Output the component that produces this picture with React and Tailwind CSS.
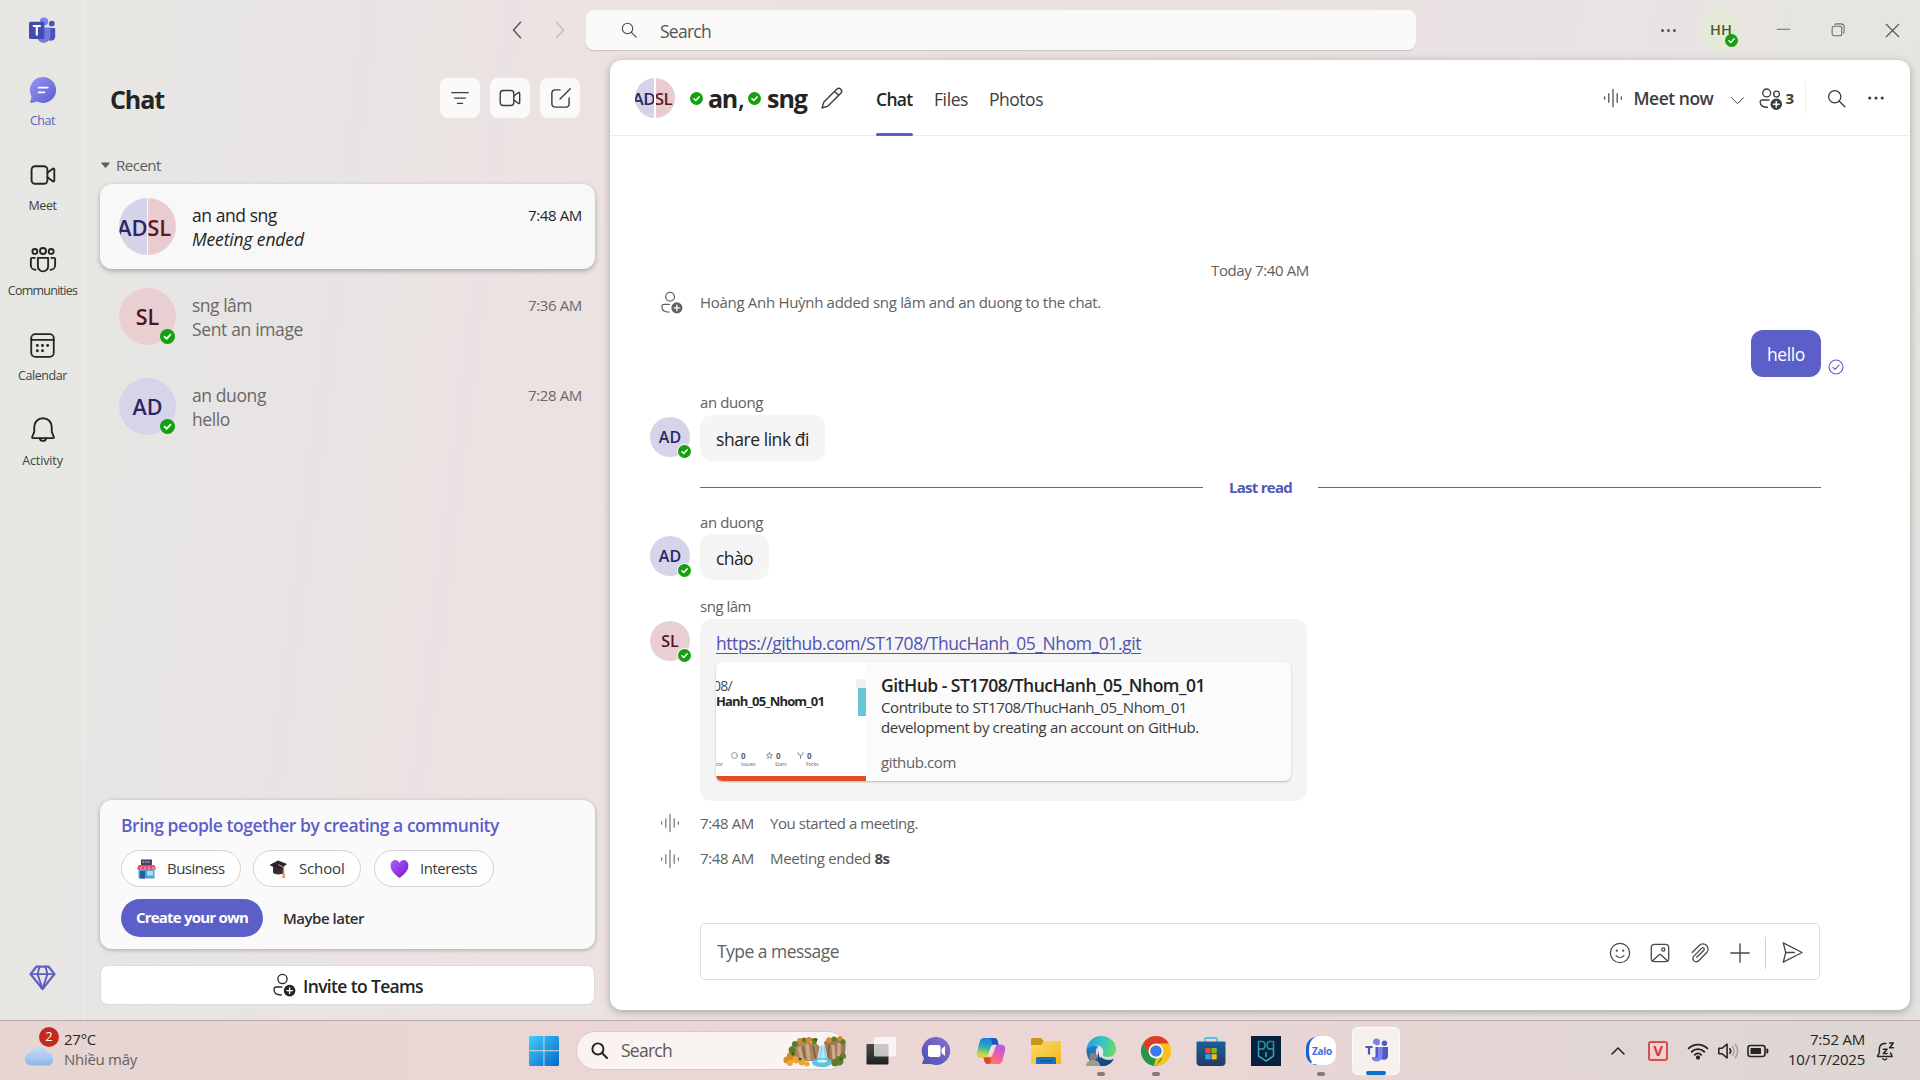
import React from "react";

function Svg({ size = 24, w, h, vb = "0 0 24 24", sw = 1.5, className = "", children }) {
  return (
    <svg
      width={w || size}
      height={h || size}
      viewBox={vb}
      fill="none"
      stroke="currentColor"
      strokeWidth={sw}
      strokeLinecap="round"
      strokeLinejoin="round"
      className={"shrink-0 " + className}
    >
      {children}
    </svg>
  );
}

/* ---------- line icons ---------- */
const Video = (p) => (
  <Svg {...p}>
    <rect x="2.2" y="4.5" width="13.6" height="15" rx="3" />
    <path d="M15.8 10l4.6-3.4c.6-.4 1.3 0 1.3.7v9.4c0 .7-.7 1.1-1.3.7L15.8 14" />
  </Svg>
);
const Magnifier = (p) => (
  <Svg {...p}>
    <circle cx="10" cy="10" r="7" />
    <path d="M15.2 15.2L21.5 21.5" />
  </Svg>
);
const Dots = (p) => (
  <Svg {...p} sw={0}>
    <g fill="currentColor">
      <circle cx="4.5" cy="12" r="1.9" />
      <circle cx="12" cy="12" r="1.9" />
      <circle cx="19.5" cy="12" r="1.9" />
    </g>
  </Svg>
);
const PersonAdd = (p) => (
  <Svg {...p}>
    <circle cx="10.5" cy="6" r="4.6" />
    <path d="M9.8 14H4.2c-1.2 0-2.1.9-2.1 2v.9c0 3.2 3 5 7.2 5.1" />
    <circle cx="17.6" cy="17.6" r="5.8" fill="currentColor" stroke="none" />
    <path d="M17.6 14.7v5.8M14.7 17.6h5.8" stroke="#fff" strokeWidth="1.4" />
  </Svg>
);
const PeopleAdd = (p) => (
  <Svg {...p}>
    <circle cx="8" cy="6.2" r="4.1" />
    <circle cx="18.3" cy="7.3" r="3" />
    <path d="M10.5 13.6H3.2c-1.2 0-2 .9-2 2 0 3.4 2.8 5.6 7.6 5.5" />
    <circle cx="18" cy="18" r="6" fill="currentColor" stroke="none" />
    <path d="M18 15v6M15 18h6" stroke="#fff" strokeWidth="1.5" />
  </Svg>
);
const Wave = (p) => (
  <Svg {...p}>
    <path d="M2 10.5v3M7 6.8v10.4M12 1.5v21M17 6.8v10.4M22 10.5v3" />
  </Svg>
);
const Communities = () => (
  <Svg size={28} sw={1.6} className="text-[#242424]">
    <circle cx="5" cy="4.7" r="2.1" />
    <circle cx="12" cy="4.3" r="2.6" />
    <circle cx="19" cy="4.7" r="2.1" />
    <path d="M7.6 10.2h8.8v7.2a4.4 4.4 0 0 1-8.8 0z" />
    <path d="M4.9 10.2H2.6c-.6 0-1 .4-1 1v5.2a4 4 0 0 0 4 4M19.1 10.2h2.300c.6 0 1 .4 1 1v5.2a4 4 0 0 1-4 4" />
  </Svg>
);
const Calendar = () => (
  <Svg size={27} sw={1.6} className="text-[#242424]">
    <rect x="2" y="1.9" width="20" height="20.2" rx="3.6" />
    <path d="M2 7h20" />
    <g fill="currentColor" stroke="none">
      <circle cx="7.4" cy="12" r="1.3" />
      <circle cx="12" cy="12" r="1.3" />
      <circle cx="16.6" cy="12" r="1.3" />
      <circle cx="7.4" cy="16.6" r="1.3" />
      <circle cx="12" cy="16.6" r="1.3" />
    </g>
  </Svg>
);
const Bell = () => (
  <Svg size={28} sw={1.6} className="text-[#242424]">
    <path d="M12 1.9c-4.3 0-7.5 3.3-7.5 7.5v4.3L2.7 18c-.2.5.1 1 .6 1h17.4c.5 0 .8-.5.6-1l-1.8-4.3V9.4c0-4.2-3.2-7.5-7.5-7.5z" />
    <path d="M9.2 19.2a2.9 2.9 0 0 0 5.6 0" />
  </Svg>
);
const Diamond = () => (
  <Svg size={27} sw={2} className="text-[#5b5fc7]">
    <path d="M6.5 2.4h11L22.6 9 12 22.2 1.4 9z" />
    <path d="M1.4 9h21.2M9.3 2.4L7.6 9 12 22l4.4-13-1.7-6.6" strokeWidth="1.7" />
  </Svg>
);
const ChatBubble = () => (
  <svg width="28" height="28" viewBox="0 0 28 28" className="shrink-0">
    <defs>
      <linearGradient id="bubble" x1="0" y1="0" x2="1" y2="1">
        <stop offset="0" stopColor="#9a96f5" />
        <stop offset="1" stopColor="#5a5cd2" />
      </linearGradient>
    </defs>
    <path d="M14.3 1A13 13 0 1 1 8.2 25.6L2.6 27c-.9.2-1.5-.4-1.3-1.3l1.2-5.5A13 13 0 0 1 14.3 1z" fill="url(#bubble)" />
    <path d="M9.7 11.6h9M9.7 16.4h5.7" stroke="#fff" strokeWidth="1.9" strokeLinecap="round" />
  </svg>
);
const TeamsLogo = () => (
  <svg width="27" height="27" viewBox="0 0 27 27" className="shrink-0">
    <circle cx="22.8" cy="6.6" r="2.9" fill="#4c52bb" />
    <path d="M18 11h8.2v8.5a4.2 4.2 0 0 1-8.2 1.2z" fill="#4c52bb" />
    <circle cx="15" cy="4.6" r="4.1" fill="#7b83eb" />
    <path d="M9 10.5h12.3V19a6.7 6.7 0 0 1-12.3 3.7z" fill="#7178de" />
    <rect x="0" y="4.7" width="15.3" height="17.3" rx="1.5" fill="#444bb3" />
    <path d="M3.8 9h8M7.8 9v9.6" stroke="#fff" strokeWidth="2.2" />
  </svg>
);

function Status({ size = 15 }) {
  return (
    <svg width={size} height={size} viewBox="0 0 16 16" className="shrink-0">
      <circle cx="8" cy="8" r="8" fill="#13a10e" />
      <path d="M4.9 8.3l2.2 2.2 4-4.4" stroke="#fff" strokeWidth="2" fill="none" strokeLinecap="round" strokeLinejoin="round" />
    </svg>
  );
}

/* ---------- avatars ---------- */
function PairAvatar({ big }) {
  return (
    <div className={"flex shrink-0 gap-[1.5px] overflow-hidden rounded-full " + (big ? "size-[57px]" : "size-10")}>
      <div className="flex flex-1 items-center justify-end overflow-hidden bg-[#d5d3ea]">
        <span className={"leading-none font-semibold text-[#2b2660] " + (big ? "-mr-px text-[22px]" : "-mr-px text-[17px] tracking-[-0.03em]")}>AD</span>
      </div>
      <div className="flex flex-1 items-center justify-start overflow-hidden bg-[#e9ccd0]">
        <span className={"leading-none font-semibold text-[#5c1a24] " + (big ? "-ml-px text-[22px]" : "-ml-px text-[17px] tracking-[-0.03em]")}>SL</span>
      </div>
    </div>
  );
}
function Avatar({ name, big }) {
  const color = name === "SL" ? "bg-[#e9cfd2] text-[#4f151e]" : "bg-[#d6d4ea] text-[#2b2660]";
  return (
    <div className={"relative flex shrink-0 items-center justify-center rounded-full " + (big ? "size-[57px] " : "size-10 ") + color}>
      <span className={"leading-none font-semibold " + (big ? "text-[21.5px]" : "text-[16px]")}>{name}</span>
      <div className={"absolute flex " + (big ? "right-px bottom-px" : "-right-0.5 -bottom-0.5 rounded-full border-[1.5px] border-white")}>
        <Status size={big ? 15 : 13} />
      </div>
    </div>
  );
}

/* ---------- left rail ---------- */
function RailItem({ icon, label, active, track }) {
  return (
    <div className="flex h-[85px] flex-col items-center">
      <div className="flex h-[34px] items-center">{icon}</div>
      <span className={"mt-[5px] text-[12.5px] leading-[18px] " + track + (active ? " text-[#5b5fc7]" : " text-[#424242]")}>{label}</span>
    </div>
  );
}
function Rail() {
  return (
    <div className="flex w-[85px] shrink-0 flex-col items-center border-r border-white/40 pl-px">
      <div className="mt-[17px] h-[27px]">
        <TeamsLogo />
      </div>
      <div className="mt-[29px] flex flex-col">
        <RailItem icon={<ChatBubble />} label="Chat" active track="tracking-[-0.035em]" />
        <RailItem icon={<Video size={28} sw={1.6} className="text-[#242424]" />} label="Meet" track="tracking-[-0.035em]" />
        <RailItem icon={<Communities />} label="Communities" track="tracking-[-0.06em]" />
        <RailItem icon={<Calendar />} label="Calendar" track="tracking-[-0.034em]" />
        <RailItem icon={<Bell />} label="Activity" track="tracking-[-0.01em]" />
      </div>
      <div className="mt-auto mb-[29px]">
        <Diamond />
      </div>
    </div>
  );
}

/* ---------- conversation list ---------- */
function SquareButton({ children }) {
  return <div className="flex size-10 items-center justify-center rounded-lg bg-[#fbfaf9] text-[#3d3d3d]">{children}</div>;
}
function Row({ avatar, title, sub, time, selected, subClass = "", titleClass = "" }) {
  return (
    <div
      className={
        "flex h-[85px] items-center rounded-xl pr-[13px] pl-[19px] " +
        (selected ? "bg-[#f9f8f8] text-[#242424] shadow-[0_2px_5px_rgba(0,0,0,0.28)]" : "text-[#6a6866]")
      }
    >
      {avatar}
      <div className="ml-[16px] flex flex-1 flex-col">
        <div className="flex items-center justify-between">
          <span className={"text-[17.5px] leading-6 " + titleClass}>{title}</span>
          <span className="text-[15px] leading-6 tracking-[-0.0243em]">{time}</span>
        </div>
        <span className={"text-[17.5px] leading-6 " + subClass}>{sub}</span>
      </div>
    </div>
  );
}
function Chip({ icon, label, w, track }) {
  return (
    <div className={"flex h-[37px] items-center rounded-full border border-[#d4d2d2] bg-[#fefefe] pl-[15px] " + w}>
      {icon}
      <span className={"ml-[11px] text-[15px] leading-none font-medium text-[#3a3a3a] " + track}>{label}</span>
    </div>
  );
}
const Shop = () => (
  <svg width="19" height="20" viewBox="0 0 19 20">
    <rect x="4" y="0.5" width="11" height="5.5" fill="#43455e" />
    <path d="M5.5 3.2h8" stroke="#c8b9d6" strokeWidth="1.2" strokeDasharray="1.6 1" />
    <rect x="1.5" y="9" width="16" height="10.5" fill="#4fa3cf" />
    <rect x="3" y="12" width="5" height="7.5" fill="#2b5e96" />
    <rect x="10" y="12" width="6" height="4.5" fill="#a9def0" />
    <path d="M1.500 6h16L19 10.500H0z" fill="#e4506b" />
    <path d="M4 8v2.500M8 8v2.500M12 8v2.500M16 8v2.500" stroke="#f59aa9" strokeWidth="1.4" />
  </svg>
);
const Cap = () => (
  <svg width="19" height="20" viewBox="0 0 19 20">
    <path d="M4 7.500h11v6.200c-2.500 2.300-8.500 2.300-11 0z" fill="#3c2a35" />
    <path d="M0.500 6L9 1.500 18 5l-8 6z" fill="#2b2230" />
    <path d="M9.500 5.500l5 3v7" stroke="#c58257" strokeWidth="1.3" fill="none" />
    <path d="M13.500 14.500h2.200l.6 4.500h-3.200z" fill="#e2a06e" />
  </svg>
);
const Heart = () => (
  <svg width="19" height="20" viewBox="0 0 19 20">
    <defs>
      <linearGradient id="heart" x1="0" y1="0" x2="1" y2="1">
        <stop offset="0" stopColor="#b35df5" />
        <stop offset="1" stopColor="#7416d8" />
      </linearGradient>
    </defs>
    <path d="M9.500 19C4 15 .6 11.500.6 6.600.6 3.300 2.700 1 5.300 1c1.900 0 3.400 1.100 4.200 2.900C10.300 2.100 11.800 1 13.700 1c2.600 0 4.700 2.300 4.700 5.600 0 4.900-3.400 8.400-8.900 12.400z" fill="url(#heart)" />
  </svg>
);
function Sidebar() {
  return (
    <div className="flex w-[525px] shrink-0 flex-col pr-[15px] pl-[15px]">
      <div className="mt-[18px] flex h-10 items-center pr-[15px] pl-[10px]">
        <span className="pt-0.5 text-[25px] leading-none font-bold tracking-[-0.043em] text-[#242424]">Chat</span>
        <div className="ml-auto flex gap-[10px]">
          <SquareButton>
            <Svg size={20} sw={1.5}>
              <path d="M2 5.500h20M5.500 12h13M9 18.500h6" />
            </Svg>
          </SquareButton>
          <SquareButton>
            <Video size={24} sw={1.4} />
          </SquareButton>
          <SquareButton>
            <Svg size={23} sw={1.5}>
              <path d="M11.500 3H6.500A3.500 3.500 0 0 0 3 6.500v11A3.500 3.500 0 0 0 6.500 21h11a3.500 3.500 0 0 0 3.500-3.500v-6M11.500 12.500L22.200 1.800" />
            </Svg>
          </SquareButton>
        </div>
      </div>
      <div className="mt-[35px] flex h-6 items-center text-[#5f5d5c]">
        <svg width="9" height="6" viewBox="0 0 9 6" className="ml-px">
          <path d="M1 .5h7c.6 0 .8.6.5 1L5 5.600c-.3.3-.7.3-1 0L.5 1.500c-.4-.4-.1-1 .5-1z" fill="currentColor" />
        </svg>
        <span className="ml-[6px] text-[15px] leading-none tracking-[-0.032em]">Recent</span>
      </div>
      <div className="mt-[7px] flex flex-col gap-[5px]">
        <Row selected avatar={<PairAvatar big />} title="an and sng" titleClass="tracking-[-0.025em]" sub="Meeting ended" subClass="italic tracking-[-0.008em]" time="7:48 AM" />
        <Row avatar={<Avatar name="SL" big />} title="sng lâm" titleClass="tracking-[-0.028em]" sub="Sent an image" subClass="tracking-[-0.02em]" time="7:36 AM" />
        <Row avatar={<Avatar name="AD" big />} title="an duong" titleClass="tracking-[-0.023em]" sub="hello" subClass="tracking-[-0.022em]" time="7:28 AM" />
      </div>
      <div className="mt-auto flex h-[149px] flex-col rounded-xl bg-[#fbfafa] px-[21px] pt-[13px] shadow-[0_1px_4px_rgba(0,0,0,0.28)]">
        <span className="text-[17.5px] leading-6 font-semibold tracking-[-0.0258em] text-[#5b5fc7]">Bring people together by creating a community</span>
        <div className="mt-[13px] flex gap-3">
          <Chip icon={<Shop />} label="Business" w="w-[120px]" track="tracking-[-0.035em]" />
          <Chip icon={<Cap />} label="School" w="w-[108px]" track="tracking-[-0.01em]" />
          <Chip icon={<Heart />} label="Interests" w="w-[120px] ml-[1px]" track="tracking-[-0.032em]" />
        </div>
        <div className="mt-[12px] flex items-center">
          <div className="flex h-[38px] w-[142px] items-center justify-center rounded-full bg-[#5b5fc7]">
            <span className="pb-px text-[15px] leading-none font-bold tracking-[-0.053em] text-white">Create your own</span>
          </div>
          <span className="ml-5 text-[15px] leading-none font-semibold tracking-[-0.0326em] text-[#2f2f2f]">Maybe later</span>
        </div>
      </div>
      <div className="mt-[16px] mb-[15px] flex h-10 items-center justify-center rounded-lg border border-[#dcdada] bg-white text-[#242424]">
        <PersonAdd size={24} sw={1.3} />
        <span className="ml-[7px] pt-[3px] text-[17.5px] leading-none font-semibold tracking-[-0.037em]">Invite to Teams</span>
      </div>
    </div>
  );
}

/* ---------- title bar ---------- */
function TitleBar() {
  return (
    <div className="flex h-[60px] shrink-0 items-center">
      <Svg size={24} sw={1.5} className="ml-[421px] text-[#5a5858]">
        <path d="M14.500 4.200L7.500 12l7 7.800" />
      </Svg>
      <Svg size={24} sw={1.5} className="ml-[17px] text-[#c4c0c0]">
        <path d="M9.500 4.200l7 7.800-7 7.800" />
      </Svg>
      <div className="ml-[15px] flex h-10 w-[830px] items-center rounded-lg bg-[#fbfaf8] pl-[34px] shadow-[0_1px_1px_rgba(0,0,0,0.15)]">
        <Magnifier size={18} sw={1.5} className="text-[#4c4a4a]" />
        <span className="ml-[22px] pt-1 text-[17.5px] leading-none tracking-[-0.042em] text-[#565453]">Search</span>
      </div>
      <Dots size={19} className="ml-[243px] text-[#555]" />
      <div className="relative ml-[23px] flex size-10 items-center justify-center rounded-full bg-[#e4ead6]">
        <span className="text-[14.5px] leading-none font-semibold text-[#4c5a2b]">HH</span>
        <div className="absolute right-[3px] bottom-[3px]">
          <Status size={13} />
        </div>
      </div>
      <Svg size={15} sw={1.7} className="ml-[35px] text-[#6a6a6a]">
        <path d="M2 10h20" />
      </Svg>
      <Svg size={14} sw={1.8} className="ml-[40px] text-[#6a6a6a]">
        <rect x="2" y="5.5" width="16.5" height="16.5" rx="3.5" />
        <path d="M6.500 2.500c1-.8 2-1 3.500-1h6.500a6 6 0 0 1 6 6v6.500c0 1.500-.2 2.500-1 3.500" />
      </Svg>
      <Svg size={15} sw={1.8} className="ml-[40px] text-[#555]">
        <path d="M2 2l20 20M22 2L2 22" />
      </Svg>
    </div>
  );
}

/* ---------- chat panel ---------- */
function PanelHeader() {
  return (
    <div className="flex h-[76px] shrink-0 border-b border-[#ececec] text-[#3d3d3d]">
      <div className="flex h-[76px] items-center pl-[25px]">
        <PairAvatar />
        <div className="ml-[15px] flex items-center">
          <Status size={13} />
          <span className="ml-[5px] w-[40px] text-[25px] leading-none font-bold tracking-[-0.05em] whitespace-nowrap text-[#242424]">
            an<span className="ml-px font-semibold">,</span>
          </span>
          <Status size={13} />
          <span className="ml-[6px] w-[42px] text-[25px] leading-none font-bold tracking-[-0.04em] text-[#242424]">sng</span>
        </div>
        <Svg size={24} sw={1.4} className="ml-[11px]">
          <path d="M16.700 3.200a2.900 2.900 0 0 1 4.100 4.100L8.500 19.600c-.4.4-.9.7-1.400.8L2 22l1.600-5.100c.1-.5.4-1 .8-1.400zM14.600 5.300l4.100 4.100" />
        </Svg>
        <div className="ml-[32px] flex h-[75px] gap-[21px] text-[17.5px] leading-none">
          <div className="relative flex w-[37px] items-center pt-[3px]">
            <span className="font-semibold tracking-[-0.04em] text-[#242424]">Chat</span>
            <div className="absolute bottom-0 left-0 h-[3px] w-full rounded-full bg-[#5b5fc7]" />
          </div>
          <div className="flex w-[34px] items-center pt-[3px] tracking-[-0.0234em]">Files</div>
          <div className="flex items-center pt-[3px] tracking-[-0.0277em]">Photos</div>
        </div>
      </div>
      <div className="ml-auto flex h-[76px] items-center pr-[24px]">
        <Wave size={20} sw={1.4} />
        <span className="ml-[10px] pt-0.5 text-[17.5px] leading-none font-semibold tracking-[-0.0273em]">Meet now</span>
        <Svg size={15} sw={1.6} className="mt-1 ml-[17px]">
          <path d="M2.500 7.500L12 17l9.500-9.500" />
        </Svg>
        <PeopleAdd size={23} sw={1.4} className="ml-[14px]" />
        <span className="ml-[3px] text-[15px] leading-none font-bold">3</span>
        <div className="ml-[11px] h-8 w-px bg-[#efefef]" />
        <Magnifier size={21} sw={1.5} className="ml-[20px]" />
        <Dots size={20} className="ml-[19px]" />
      </div>
    </div>
  );
}
function Gutter({ children }) {
  return (
    <div className="flex w-[90px] shrink-0 justify-end pr-[10px]">
      <div className="flex w-10 items-center justify-center">{children}</div>
    </div>
  );
}
function Name({ children, className = "" }) {
  return <div className={"h-[18px] pl-[90px] text-[15px] leading-[18px] text-[#616161] " + className}>{children}</div>;
}
function Message({ who, text, w, track, mt }) {
  return (
    <div className={"flex items-start " + mt}>
      <div className="mt-[2px]">
        <Gutter>
          <Avatar name={who} />
        </Gutter>
      </div>
      <div className={"flex h-[46px] items-center rounded-xl bg-[#f5f5f5] pl-4 " + w}>
        <span className={"pt-[3px] text-[17.5px] leading-none text-[#242424] " + track}>{text}</span>
      </div>
    </div>
  );
}
function Thumb() {
  return (
    <div className="relative flex w-[150px] shrink-0 flex-col overflow-hidden bg-white">
      <span className="mt-[15px] -ml-[3px] text-[14px] leading-[18px] tracking-[-0.05em] text-[#444c56]">08/</span>
      <span className="-mt-[2px] text-[13px] leading-[16px] font-bold tracking-[-0.0646em] whitespace-nowrap text-[#24292f]">Hanh_05_Nhom_01</span>
      <div className="absolute top-[17px] right-0 flex flex-col">
        <div className="h-[9px] w-[10px] bg-[#eef1f3]" />
        <div className="ml-[2px] h-[28px] w-2 bg-[#67c7d4]" />
      </div>
      <div className="mt-[42px] flex text-[8px] leading-[9px] text-[#57606a]">
        <div className="flex w-[15px] flex-col justify-end text-[5px] leading-[8px]">tor</div>
        <div className="flex w-[35px] flex-col">
          <div className="flex items-center gap-[3px] font-bold">
            <Svg size={7} sw={2.2}>
              <circle cx="12" cy="12" r="10" />
            </Svg>
            0
          </div>
          <span className="ml-[10px] text-[5px] leading-[8px]">Issues</span>
        </div>
        <div className="flex w-[31px] flex-col">
          <div className="flex items-center gap-[3px] font-bold">
            <Svg size={7} sw={2.2}>
              <path d="M12 2l3 7 7 .5-5.500 4.500L18.500 22 12 17.500 5.500 22l2-8L2 9.500 9 9z" />
            </Svg>
            0
          </div>
          <span className="ml-[9px] text-[5px] leading-[8px]">Stars</span>
        </div>
        <div className="flex flex-col">
          <div className="flex items-center gap-[3px] font-bold">
            <Svg size={7} sw={2.6}>
              <path d="M4 3v4l8 6 8-6V3M12 13v9" />
            </Svg>
            0
          </div>
          <span className="ml-[9px] text-[5px] leading-[8px]">Forks</span>
        </div>
      </div>
      <div className="mt-auto h-[5px] bg-[#e34c26]" />
    </div>
  );
}
function Conversation() {
  return (
    <div className="flex flex-1 flex-col">
      <div className="mt-[124px] flex h-5 justify-center">
        <span className="text-[15px] leading-5 tracking-[-0.0244em] text-[#616161]">Today 7:40 AM</span>
      </div>
      <div className="mt-[7px] flex h-[30px] items-center text-[#616161]">
        <Gutter>
          <PersonAdd size={23} sw={1.3} className="translate-x-px" />
        </Gutter>
        <span className="text-[15px] leading-none tracking-[-0.0204em]">Hoàng Anh Huỳnh added sng lâm and an duong to the chat.</span>
      </div>
      <div className="mt-[13px] flex h-[47px] items-end justify-end pr-[66px]">
        <div className="flex h-[47px] w-[70px] items-center justify-center rounded-xl bg-[#5b5fc7]">
          <span className="pt-0.5 text-[17.5px] leading-none tracking-[-0.022em] text-white">hello</span>
        </div>
        <Svg size={16} sw={1.6} className="mb-[2px] ml-[7px] text-[#5b5fc7]">
          <circle cx="12" cy="12" r="10.5" />
          <path d="M7.500 12.500l3.200 3.200 6-6.500" />
        </Svg>
      </div>
      <Name className="mt-[16px] tracking-[-0.0266em]">an duong</Name>
      <Message mt="mt-[4px]" who="AD" text="share link đi" w="w-[125px]" track="tracking-[-0.0254em]" />
      <div className="mt-[16px] flex h-5 items-center pr-[89px] pl-[90px]">
        <div className="h-px flex-1 bg-[#6264a7]" />
        <span className="mx-[26px] text-[15px] leading-5 font-bold tracking-[-0.049em] text-[#5357b5]">Last read</span>
        <div className="h-px flex-1 bg-[#6264a7]" />
      </div>
      <Name className="mt-[16px] tracking-[-0.0266em]">an duong</Name>
      <Message mt="mt-[3px]" who="AD" text="chào" w="w-[69px]" track="tracking-[-0.034em]" />
      <Name className="mt-[17px] tracking-[-0.0324em]">sng lâm</Name>
      <div className="mt-[4px] flex items-start">
        <div className="mt-[2px]">
          <Gutter>
            <Avatar name="SL" />
          </Gutter>
        </div>
        <div className="flex h-[182px] w-[607px] flex-col rounded-xl bg-[#f4f4f4] px-4 pt-[11px]">
          <span className="text-[17.5px] leading-[26px] tracking-[-0.0243em] text-[#4f52b2] underline decoration-1 underline-offset-[3px]">https://github.com/ST1708/ThucHanh_05_Nhom_01.git</span>
          <div className="mt-[6px] flex h-[119px] w-[575px] overflow-hidden rounded-md bg-[#fbfbfb] shadow-[0_1px_2px_rgba(0,0,0,0.25)]">
            <Thumb />
            <div className="flex flex-col pt-[11px] pl-[15px] text-[#242424]">
              <span className="text-[17.5px] leading-[24px] font-semibold tracking-[-0.0288em]">GitHub - ST1708/ThucHanh_05_Nhom_01</span>
              <span className="text-[15px] leading-5 tracking-[-0.0277em] text-[#3a3a3a]">Contribute to ST1708/ThucHanh_05_Nhom_01</span>
              <span className="text-[15px] leading-5 tracking-[-0.0232em] text-[#3a3a3a]">development by creating an account on GitHub.</span>
              <span className="mt-[15px] text-[15px] leading-5 tracking-[-0.0259em] text-[#616161]">github.com</span>
            </div>
          </div>
        </div>
      </div>
      <div className="mt-[12px] flex h-5 items-center text-[15px] leading-none text-[#616161]">
        <Gutter>
          <Wave size={20} sw={1.3} />
        </Gutter>
        <span className="w-[70px] tracking-[-0.0243em]">7:48 AM</span>
        <span className="tracking-[-0.0294em]">You started a meeting.</span>
      </div>
      <div className="mt-[15px] flex h-5 items-center text-[15px] leading-none text-[#616161]">
        <Gutter>
          <Wave size={20} sw={1.3} className="translate-y-px" />
        </Gutter>
        <span className="w-[70px] tracking-[-0.0243em]">7:48 AM</span>
        <span className="tracking-[-0.0212em]">
          Meeting ended <b className="font-bold tracking-[-0.035em] text-[#484848]">8s</b>
        </span>
      </div>
      <div className="mt-auto mr-[90px] mb-[30px] ml-[90px] flex h-[57px] items-center rounded-[5px] border border-[#dedede] pr-[15px] pl-4 text-[#484848]">
        <span className="pt-px text-[17.5px] leading-none tracking-[-0.0307em] text-[#616161]">Type a message</span>
        <div className="ml-auto flex items-center gap-[18px] pt-0.5">
          <Svg size={22} sw={1.3}>
            <circle cx="12" cy="12" r="10.5" />
            <path d="M7.700 14.800c2.200 2.800 6.400 2.800 8.600 0" />
            <circle cx="8.500" cy="9.500" r="1.2" fill="currentColor" stroke="none" />
            <circle cx="15.500" cy="9.500" r="1.2" fill="currentColor" stroke="none" />
          </Svg>
          <Svg size={22} sw={1.4}>
            <rect x="2.5" y="2.5" width="19" height="19" rx="3.5" />
            <circle cx="15.600" cy="8.200" r="1.7" />
            <path d="M4 20.500l6.700-6.400c.7-.7 1.800-.7 2.600 0L20 20.500" />
          </Svg>
          <Svg size={22} sw={1.4}>
            <path d="M3.500 11.500l7.600-7.700a5.600 5.600 0 0 1 8 8L10.500 20.500a3.600 3.600 0 0 1-5.200-5.100l8.600-8.700a1.600 1.600 0 0 1 2.300 2.300l-7.700 7.700" />
          </Svg>
          <Svg size={22} sw={1.5}>
            <path d="M12 2v20M2 12h20" />
          </Svg>
          <div className="-ml-[4px] h-8 w-px bg-[#d1d1d1]" />
          <Svg size={23} sw={1.4} className="-ml-[3px]">
            <path d="M2.300 1.900L22 12 2.300 22.100 5 12zM5 12h9" />
          </Svg>
        </div>
      </div>
    </div>
  );
}

/* ---------- taskbar ---------- */
const Windows = () => (
  <svg width="30" height="30" viewBox="0 0 30 30">
    <defs>
      <linearGradient id="win" x1="0" y1="0" x2="1" y2="1">
        <stop offset="0" stopColor="#3fcdfb" />
        <stop offset="1" stopColor="#0569c9" />
      </linearGradient>
    </defs>
    <path d="M1.500 0H14.500V14.300H0V1.500Q0 0 1.500 0zM15.400 0H28.500Q30 0 30 1.500V14.300H15.400zM0 15.300H14.500V30H1.500Q0 30 0 28.500zM15.400 15.300H30V28.500Q30 30 28.500 30H15.400z" fill="url(#win)" />
  </svg>
);
const Waterfall = () => (
  <svg width="64" height="32" viewBox="0 0 64 32">
    <path d="M7 14C10 4 22 3 32 7l5 5v14H8z" fill="#a8855f" />
    <path d="M41 7c6-5 15-5 20-3 3 7 2 16-2 23H44z" fill="#9c7a55" />
    <path d="M16 12l3 12M24 9l2 16M50 10l1 14M56 8v13" stroke="#c9a986" strokeWidth="3.5" />
    <path d="M20 12l2 11M30 11l3 14M46 10l-1 13" stroke="#7d5d41" strokeWidth="1.5" />
    <path d="M37 10h5l3 15H34z" fill="#bfe6f5" />
    <path d="M39 12l-2 12M41.500 12l1.500 12" stroke="#79cce8" strokeWidth="1.3" />
    <ellipse cx="39" cy="27.500" rx="10" ry="4.500" fill="#5cc3e4" />
    <ellipse cx="39" cy="26" rx="5" ry="1.500" fill="#d5f2fb" />
    <g fill="#d98a24">
      <circle cx="17" cy="6" r="3" />
      <circle cx="26" cy="5" r="3" />
      <circle cx="46" cy="5" r="2.8" />
      <circle cx="8" cy="21" r="4" />
      <circle cx="4" cy="25" r="3.5" />
      <circle cx="57" cy="3.500" r="2.4" />
    </g>
    <g fill="#5d7d2b">
      <circle cx="12" cy="9" r="3" />
      <circle cx="21" cy="5" r="2.4" />
      <circle cx="31" cy="6" r="3" />
      <circle cx="9" cy="15" r="3.4" />
      <circle cx="51" cy="4" r="2.6" />
      <circle cx="60" cy="7" r="2.6" />
      <circle cx="56" cy="26" r="4.5" />
      <circle cx="52" cy="28" r="3.5" />
      <circle cx="60" cy="21" r="3" />
    </g>
    <g fill="#e9a73a">
      <circle cx="13" cy="25" r="3.6" />
      <circle cx="19" cy="27" r="3.5" />
      <circle cx="24" cy="29" r="2.5" />
      <circle cx="7" cy="28" r="3" />
      <circle cx="28" cy="7" r="1.6" />
    </g>
    <g fill="#3f5f20">
      <circle cx="10" cy="19" r="1.8" />
      <circle cx="17" cy="24" r="1.6" />
      <circle cx="58" cy="24" r="1.6" />
      <circle cx="33" cy="4.500" r="1.5" />
    </g>
  </svg>
);
const TaskView = () => (
  <svg width="30" height="30" viewBox="0 0 30 30">
    <defs>
      <linearGradient id="tv" x1="0" y1="0" x2="0" y2="1">
        <stop offset="0" stopColor="#4a4a4a" />
        <stop offset="1" stopColor="#1f1f1f" />
      </linearGradient>
    </defs>
    <rect x="0.5" y="8" width="22" height="20.5" rx="1" fill="url(#tv)" />
    <rect x="8" y="1" width="22" height="19.5" rx="1" fill="#fff" fillOpacity="0.7" />
  </svg>
);
const VideoChat = () => (
  <svg width="30" height="30" viewBox="0 0 30 30">
    <defs>
      <linearGradient id="vc" x1="0" y1="1" x2="1" y2="0">
        <stop offset="0" stopColor="#4b4fb5" />
        <stop offset="1" stopColor="#8a70cf" />
      </linearGradient>
    </defs>
    <path d="M15.500 1A14 14 0 1 1 10 28H2c-.8 0-1-.6-.7-1.200L3 22.500A14 14 0 0 1 15.500 1z" fill="url(#vc)" />
    <rect x="7" y="9" width="12.5" height="12" rx="2" fill="#fff" />
    <path d="M20.500 13l3.500-3v10l-3.500-3z" fill="#fff" />
  </svg>
);
const Copilot = () => (
  <svg width="30" height="30" viewBox="0 0 30 30">
    <defs>
      <linearGradient id="cpa" x1="0.3" y1="0" x2="0.1" y2="1">
        <stop offset="0" stopColor="#1b7ce8" />
        <stop offset="0.45" stopColor="#2fb5a8" />
        <stop offset="0.8" stopColor="#c9dc3c" />
        <stop offset="1" stopColor="#f7c62c" />
      </linearGradient>
      <linearGradient id="cpb" x1="0.8" y1="0" x2="0.2" y2="1">
        <stop offset="0" stopColor="#a45de8" />
        <stop offset="0.5" stopColor="#ee5fa0" />
        <stop offset="1" stopColor="#f98b4a" />
      </linearGradient>
    </defs>
    <path d="M8 2h10c2 0 3 1 3.600 3l1 4h-4.300c-2 0-3 1-3.600 3l-2 7c-.6 2-1.700 3-3.500 3H5c-3.500 0-4.800-2.500-4-6L3.500 6C4.200 3.300 5.500 2 8 2z" fill="url(#cpa)" />
    <path d="M15 2h3c2 0 3 1 3.600 3l1 4h-4.200c-1.500 0-2-.8-2.400-2z" fill="#1d52c4" />
    <path d="M22 28H12c-2 0-3-1-3.600-3l-1-3.500h2.300c2 0 3-1 3.600-3l2.400-7c.6-1.800 1.600-2.700 3.300-2.700h6c3.500 0 4.800 2.300 4 6L26.500 24c-.7 2.700-2 4-4.500 4z" fill="url(#cpb)" />
    <path d="M8.400 25l-1-3.500h2.300c2 0 3-1 3.600-3l.5-1.500 1 7c.2 2.500-.5 4-2.800 4-2 0-3-1-3.600-3z" fill="#e0452d" />
    <path d="M14 13.500c.6-2.500 1.500-4 3.500-4.700h3l-3.800 9.700c-.6 1.800-1.600 2.700-3.300 2.700h-2z" fill="#fbe6e6" fillOpacity="0.85" />
  </svg>
);
const Folder = () => (
  <svg width="30" height="30" viewBox="0 0 30 30">
    <defs>
      <linearGradient id="fd" x1="0" y1="0" x2="1" y2="1">
        <stop offset="0" stopColor="#fbdc63" />
        <stop offset="1" stopColor="#f1b71c" />
      </linearGradient>
    </defs>
    <path d="M0 3.500Q0 2 1.500 2H10l3 3.500H30V14H0z" fill="#c9941a" />
    <path d="M0 9h10l3-4H29.500q.5 0 .5.500V28H0z" fill="url(#fd)" />
    <path d="M5 28v-5.500Q5 21 6.500 21h17q1.500 0 1.500 1.500V28z" fill="#1c71bd" />
    <path d="M9.500 25h11" stroke="#0c4f90" strokeWidth="1.2" />
  </svg>
);
const Edge = () => (
  <svg width="30" height="30" viewBox="0 0 30 30">
    <defs>
      <linearGradient id="eg" x1="0" y1="0.3" x2="1" y2="0.5">
        <stop offset="0" stopColor="#2a9fe0" />
        <stop offset="0.5" stopColor="#35c1c9" />
        <stop offset="1" stopColor="#66dd62" />
      </linearGradient>
      <linearGradient id="eg2" x1="0" y1="0" x2="0" y2="1">
        <stop offset="0" stopColor="#1c86cf" />
        <stop offset="1" stopColor="#0f5298" />
      </linearGradient>
    </defs>
    <path d="M0.500 13C1.500 5.500 7.500 0 15 0c8.500 0 15 6 15 13 0 5-3.500 8-8 8-4 0-6-1.500-5.500-3 2-3 0-8-5-8.500C7 9 2.500 10.500.5 13z" fill="url(#eg)" />
    <path d="M0.500 13C3 10 8 8.500 12 10.500c-3 3-3.500 10 2 14.500 4 3 9 2.500 13-.5-3 4-7.500 6-12 6C6.500 30 0 23 .5 13z" fill="url(#eg2)" />
    <path d="M13 15c0 7 6.500 11 15 8-2.500 4.500-7.500 7-13 7-4-3-4.500-11-2-15z" fill="#144b84" />
    <circle cx="7" cy="20.500" r="3.7" fill="#8c8078" />
    <path d="M0 30c0-8 14-8 14 0z" fill="#a5988f" />
    <path d="M13 11.500c3 .5 5.500 4 3.500 8l-2.500 2.500c-1.500-3-2-7-1-10.500z" fill="#f0e6e6" />
  </svg>
);
const Chrome = () => (
  <svg width="30" height="30" viewBox="0 0 30 30">
    <circle cx="15" cy="15" r="15" fill="#fbc116" />
    <path d="M15 0A15 15 0 0 1 28 7.500H15A7.500 7.500 0 0 0 8.500 18.700L2 7.500A15 15 0 0 1 15 0z" fill="#dd3c2d" />
    <path d="M2 7.500L8.500 18.700A7.500 7.500 0 0 0 15 22.500h6.500L15 30A15 15 0 0 1 2 7.500z" fill="#21964c" />
    <path d="M21.500 18.700L15 30 13 29l2-6.500z" fill="#fbc116" />
    <circle cx="15" cy="15" r="7.3" fill="#fff" />
    <circle cx="15" cy="15" r="5.8" fill="#3b7ae8" />
  </svg>
);
const Store = () => (
  <svg width="30" height="30" viewBox="0 0 30 30">
    <defs>
      <linearGradient id="st" x1="0" y1="0" x2="0" y2="1">
        <stop offset="0" stopColor="#1a609f" />
        <stop offset="1" stopColor="#233a63" />
      </linearGradient>
    </defs>
    <path d="M9 7V3Q9 2 10 2H20q1 0 1 1V7" stroke="#4fc3ea" strokeWidth="1.8" fill="none" />
    <path d="M0.500 6.500Q.5 5.500 1.500 5.500h27q1 0 1 1V26q0 4-4 4H4.500q-4 0-4-4z" fill="url(#st)" />
    <rect x="9.3" y="12" width="5.2" height="5.2" fill="#f04e28" />
    <rect x="15.5" y="12" width="5.2" height="5.2" fill="#81bb16" />
    <rect x="9.3" y="18.2" width="5.2" height="5.2" fill="#24a7ec" />
    <rect x="15.5" y="18.2" width="5.2" height="5.2" fill="#fcb91a" />
  </svg>
);
const Mask = () => (
  <svg width="30" height="30" viewBox="0 0 30 30">
    <defs>
      <linearGradient id="mk" x1="0" y1="0" x2="0" y2="1">
        <stop offset="0" stopColor="#1d8f93" />
        <stop offset="1" stopColor="#55b9c9" />
      </linearGradient>
    </defs>
    <rect width="30" height="30" fill="#08213f" />
    <path d="M7.500 19.500V5.500h3.500c2 0 3 1.500 3 3.500s-1 4-3 4H7.500M22.500 13h-3.500c-2 0-3-2-3-4s1-3.500 3-3.500h3.500v14.500l-7.500 5-7.500-5v-3.500M15 16v5" stroke="url(#mk)" strokeWidth="1.5" fill="none" strokeLinejoin="round" />
  </svg>
);
const Zalo = () => (
  <div className="relative flex size-[30px] items-center justify-center">
    <svg width="30" height="30" viewBox="0 0 30 30" className="absolute inset-0">
      <rect x="0" y="1" width="24" height="28" rx="11" fill="#1b5fd9" />
      <path d="M15 0h3c8 0 12 4 12 12v5c0 8-4 12-12 12-4 0-8 0-10-1.300-1.200.5-2 .6-3 .3.7-.8.8-1.500.7-2.500C3.500 22.500 3 19 3 14 3 5 7 0 15 0z" fill="#fff" />
    </svg>
    <span className="relative ml-[3px] text-[10px] leading-none font-bold tracking-[-0.03em] text-[#3a6fe0]">Zalo</span>
  </div>
);
const TeamsTask = () => (
  <svg width="30" height="30" viewBox="0 0 30 30">
    <circle cx="23.500" cy="7.300" r="2.7" fill="#5059c9" />
    <path d="M19 11h8v8.500a4 4 0 0 1-8 .5z" fill="#5059c9" />
    <circle cx="15.500" cy="6" r="3.500" fill="#7b83eb" />
    <path d="M11 11h10.500v9a6 6 0 0 1-10.500 3.500z" fill="#7b83eb" />
    <path d="M14 11h3v10.500h-3z" fill="#5059c9" />
    <rect x="3" y="8" width="11.5" height="13" rx="1" fill="#f8f2f1" />
    <path d="M4.500 11h7M8 11v7.500" stroke="#4b53bc" strokeWidth="2.2" />
  </svg>
);
function TaskApp({ children, running, active }) {
  return (
    <div className="flex w-[55px] justify-center">
      <div className={"relative flex size-12 items-center justify-center rounded-md " + (active ? "border border-white/60 bg-[#f6f0ef]" : "")}>
        {children}
        {running && <div className="absolute -bottom-px left-5 h-1 w-2 rounded-full bg-[#857b7b]" />}
        {active && <div className="absolute -bottom-px left-[13px] h-1 w-5 rounded-full bg-[#0f70c5]" />}
      </div>
    </div>
  );
}
function Taskbar() {
  return (
    <div className="flex h-[60px] shrink-0 items-center border-t border-[#b9abab] bg-linear-to-r from-[#e6d5d3] via-[#edd6d6] to-[#ddd6d3]">
      <div className="relative flex w-[529px] items-center">
        <svg width="34" height="22" viewBox="0 0 34 22" className="ml-[24px] translate-y-[4px]">
          <defs>
            <linearGradient id="cl" x1="0" y1="0" x2="0" y2="1">
              <stop offset="0" stopColor="#c3d9f6" />
              <stop offset="0.6" stopColor="#a9c7ef" />
              <stop offset="1" stopColor="#8cb2e6" />
            </linearGradient>
          </defs>
          <path d="M7.500 21.500a6.500 6.500 0 0 1-.3-13A9 9 0 0 1 24 9a6.400 6.400 0 0 1 .5 12.500z" fill="url(#cl)" />
        </svg>
        <div className="absolute top-[-2px] left-[39px] flex size-5 items-center justify-center rounded-full bg-[#c42b1c]">
          <span className="text-[13px] leading-none text-white">2</span>
        </div>
        <div className="ml-[6px] flex flex-col pb-1 text-[15px] leading-5">
          <span className="tracking-[-0.0172em] text-[#2b2727]">27°C</span>
          <span className="tracking-[-0.0189em] text-[#665f5f]">Nhiều mây</span>
        </div>
      </div>
      <Windows />
      <div className="ml-[17px] flex h-[39px] w-[272px] items-center rounded-full border border-[#d9c8c8] bg-[#f9f3f1] pl-[13px]">
        <Magnifier size={19} sw={2.5} className="text-[#242424]" />
        <span className="ml-[12px] text-[17.5px] leading-none tracking-[-0.042em] text-[#5c5757]">Search</span>
        <div className="ml-auto">
          <Waterfall />
        </div>
      </div>
      <div className="ml-[5px] flex">
        <TaskApp><TaskView /></TaskApp>
        <TaskApp><VideoChat /></TaskApp>
        <TaskApp><Copilot /></TaskApp>
        <TaskApp><Folder /></TaskApp>
        <TaskApp running><Edge /></TaskApp>
        <TaskApp running><Chrome /></TaskApp>
        <TaskApp><Store /></TaskApp>
        <TaskApp><Mask /></TaskApp>
        <TaskApp running><Zalo /></TaskApp>
        <TaskApp active><TeamsTask /></TaskApp>
      </div>
      <div className="ml-auto flex items-center pr-[25px] text-[#242424]">
        <Svg size={16} sw={2.3}>
          <path d="M3 16.500L12 7.500l9 9" />
        </Svg>
        <div className="ml-[22px] flex size-5 items-center justify-center rounded-[3px] border-2 border-[#d0504c] bg-[#f3cfcd]">
          <span className="text-[15px] leading-none font-bold text-[#c7403c]">V</span>
        </div>
        <Svg size={22} sw={2} className="ml-[19px]">
          <path d="M1.800 9.200a14.500 14.500 0 0 1 20.400 0M5.200 12.800a9.600 9.600 0 0 1 13.600 0M8.500 16.200a5 5 0 0 1 7 0" />
          <circle cx="12" cy="19.200" r="1.3" fill="currentColor" />
        </Svg>
        <Svg size={22} sw={1.7} className="ml-[8px]">
          <path d="M2 9h3.500L11 4.500v15L5.500 15H2zM14 9.500a4 4 0 0 1 0 5" />
          <path d="M17 7.500a7 7 0 0 1 0 9M20 5a11 11 0 0 1 0 14" stroke="#a59c9c" />
        </Svg>
        <Svg w={22} h={16} vb="0 0 22 16" sw={1.6} className="ml-[8px]">
          <rect x="1" y="2.5" width="17" height="11" rx="2.5" />
          <rect x="3.5" y="5" width="10.5" height="6" rx="0.5" fill="currentColor" stroke="none" />
          <path d="M20.300 6.500v3" strokeWidth="2" />
        </Svg>
        <div className="ml-[19px] flex flex-col items-end pb-1 text-[15px] leading-5">
          <span className="tracking-[-0.0147em]">7:52 AM</span>
          <span className="tracking-[-0.0175em]">10/17/2025</span>
        </div>
        <Svg size={20} sw={1.8} className="ml-[10px]">
          <path d="M13 3C8.500 2.300 5.200 5.200 5.200 9.500v4.300L3 18.500h17.500l-1.800-4.200M9.500 21.500c1 1.300 3.500 1.300 4.500 0M10 10h4.500L10 15h4.500M17.500 2.500H22l-4.500 5.500H22" />
        </Svg>
      </div>
    </div>
  );
}

export default function App() {
  return (
    <div className="flex h-[1080px] w-[1920px] flex-col overflow-hidden font-['Open_Sans','Noto_Sans',sans-serif] whitespace-nowrap">
      <div className="flex h-[1020px] bg-[linear-gradient(97deg,#e6e8e3_0%,#e8e4e4_16%,#ece2e1_30%,#ebe1e1_60%,#e9e3e3_80%,#e5e6e1_93%,#e3e2e0_100%)]">
        <Rail />
        <div className="flex flex-1 flex-col">
          <TitleBar />
          <div className="flex flex-1">
            <Sidebar />
            <div className="mr-[10px] mb-[10px] flex w-[1300px] flex-col rounded-xl bg-white shadow-[0_2px_8px_rgba(0,0,0,0.28)]">
              <PanelHeader />
              <Conversation />
            </div>
          </div>
        </div>
      </div>
      <Taskbar />
    </div>
  );
}
